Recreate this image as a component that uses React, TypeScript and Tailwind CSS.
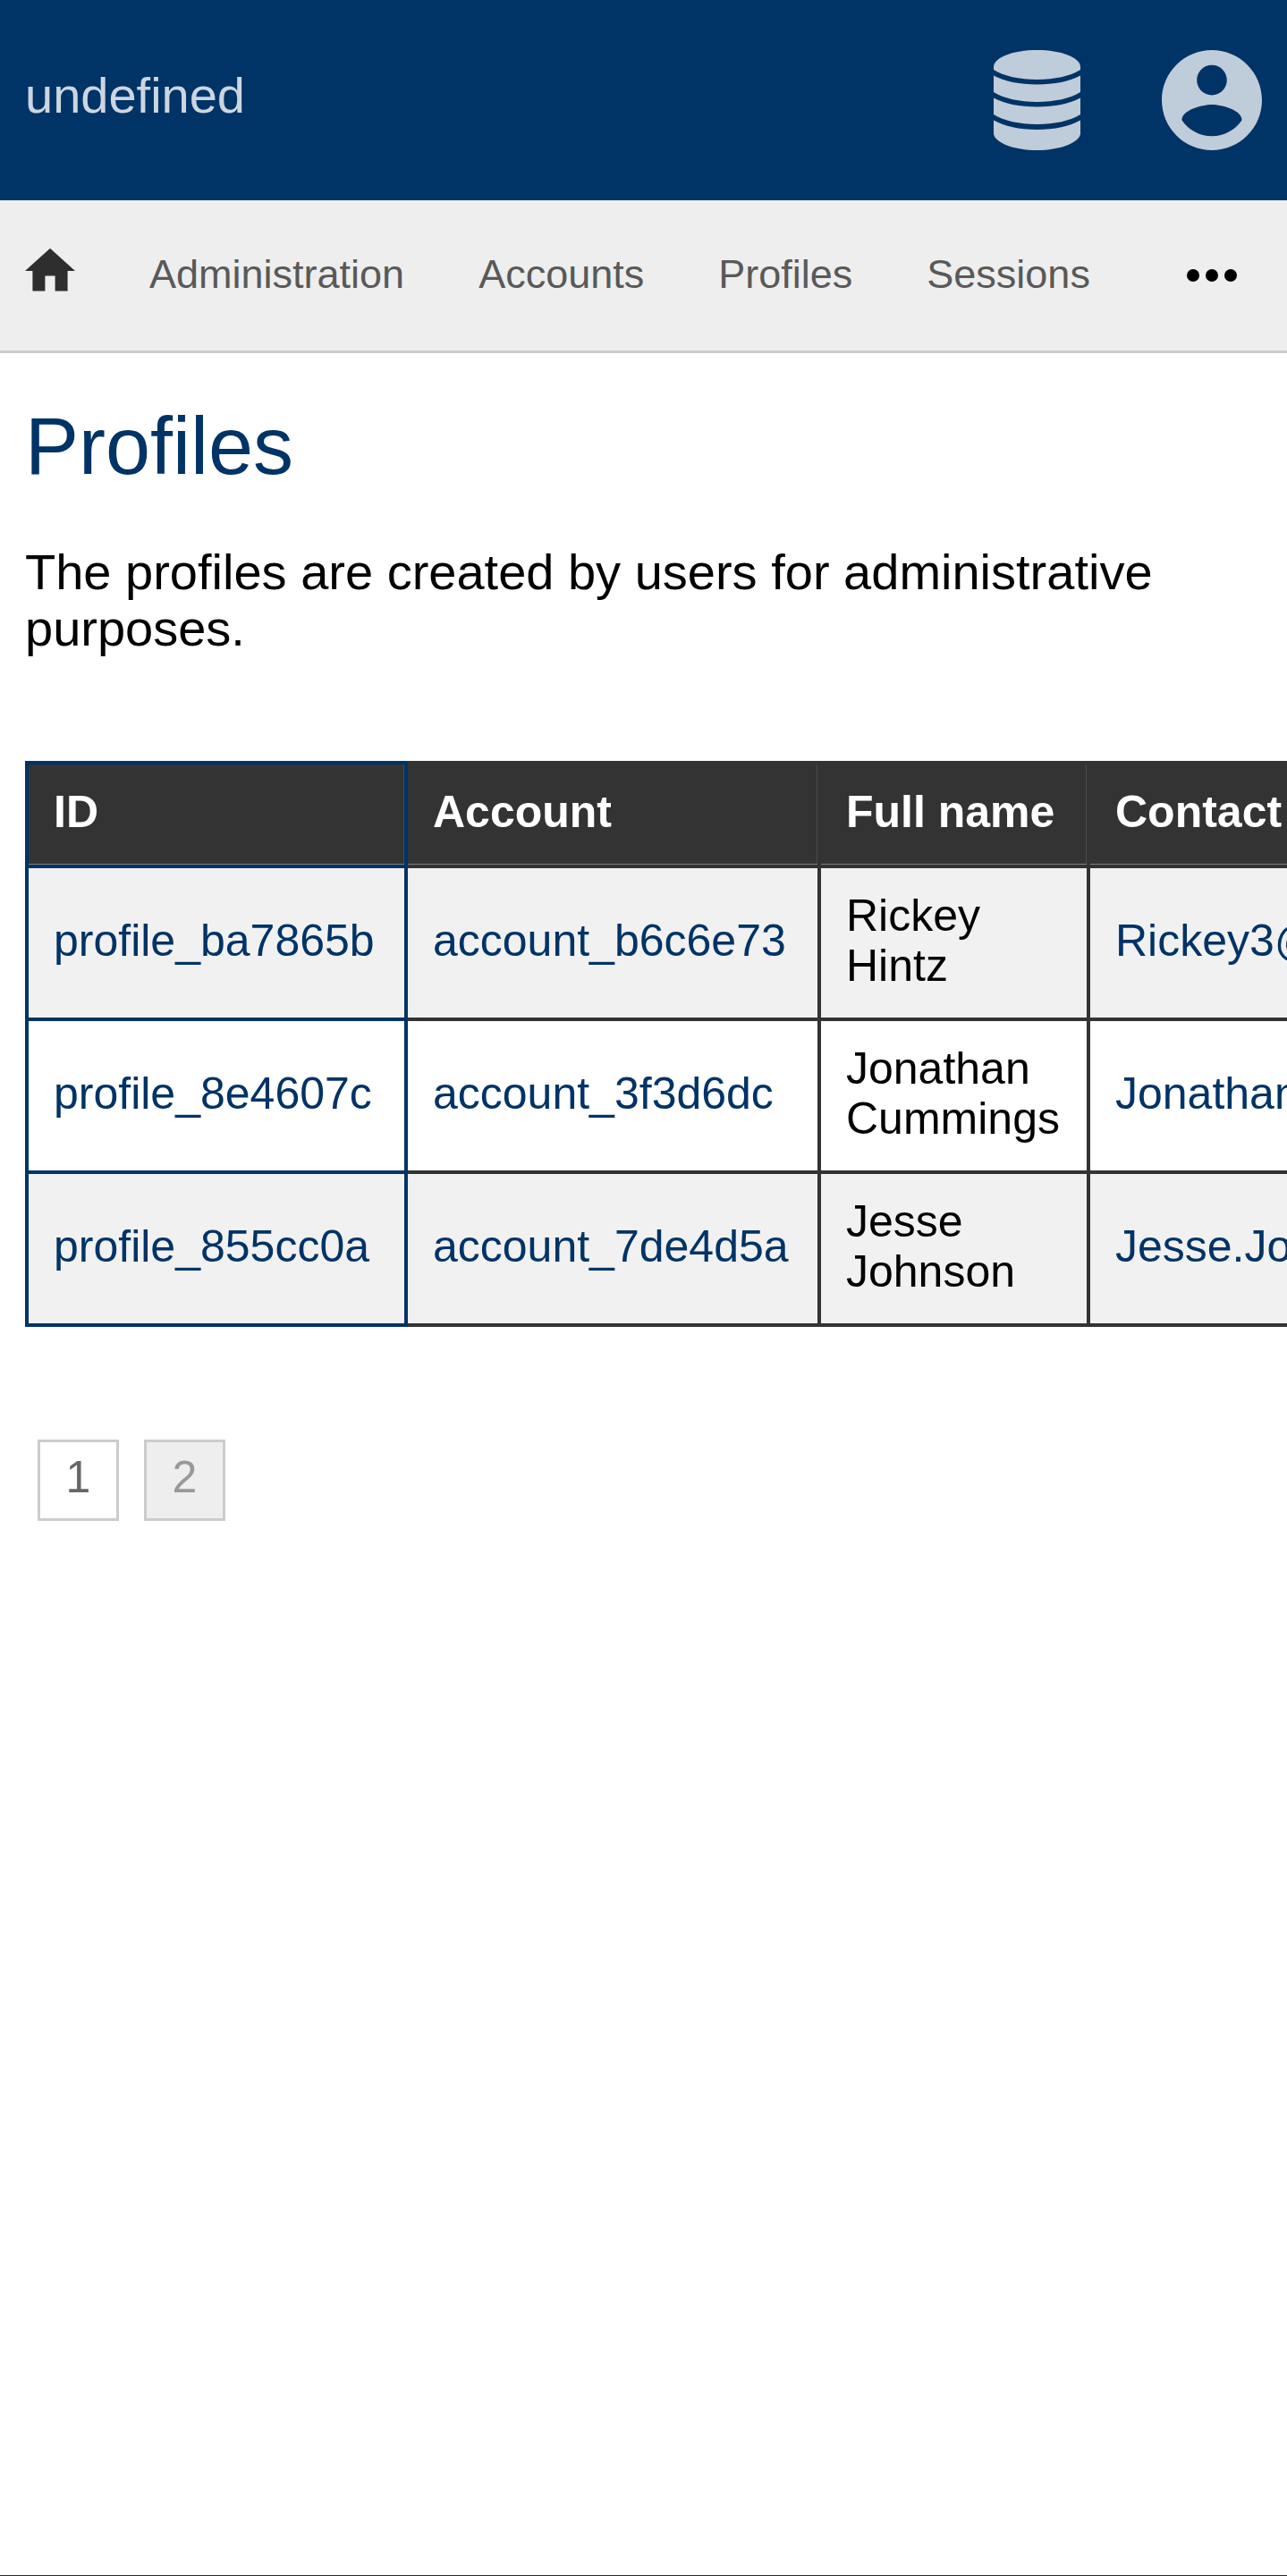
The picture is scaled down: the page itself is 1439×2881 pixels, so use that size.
import React from "react";

const navItems = ["Administration", "Accounts", "Profiles", "Sessions"];

const profiles = [
  { id: "profile_ba7865b", account: "account_b6c6e73", name: "Rickey Hintz", contact: "Rickey3@gmail.com" },
  { id: "profile_8e4607c", account: "account_3f3d6dc", name: "Jonathan Cummings", contact: "Jonathan@gmail.com" },
  { id: "profile_855cc0a", account: "account_7de4d5a", name: "Jesse Johnson", contact: "Jesse.Johnson@gmail.com" },
];

const headCell = "border-4 px-7 pt-[25px] pb-[31px] text-left font-bold whitespace-nowrap shadow-[inset_0_-1px_0_#808080,inset_-1px_0_0_#4a4a4a]";
const bodyCell = "border-4 px-7 pt-[25px] pb-[30px]";
const linkStyle = "text-[#003366]";
const pageButton = "flex size-[91px] items-center justify-center border-[3px] border-[#cccccc] pb-2";

function DatabaseIcon() {
  return (
    <svg viewBox="0 0 97 112" className="h-28 w-[97px]" fill="currentColor" aria-hidden="true">
      <path d="M0 19C0 8 22 0 48.500 0S97 8 97 19V22C86 29 68 33 48.500 33S11 29 0 22Z" />
      <path d="M0 28.500C12 35 29 38.500 48.500 38.500S85 35 97 28.500V47C86 54 68 58 48.500 58S11 54 0 47Z" />
      <path d="M0 53.500C12 60 29 63.500 48.500 63.500S85 60 97 53.500V72C86 79 68 83 48.500 83S11 79 0 72Z" />
      <path d="M0 78.500C12 85 29 89 48.500 89S85 85 97 78.500V94C95 104 74 112 48.500 112S2 104 0 94Z" />
    </svg>
  );
}

function AccountIcon() {
  return (
    <svg viewBox="2 2 20 20" className="size-28" fill="currentColor" aria-hidden="true">
      <path d="M12 2C6.48 2 2 6.48 2 12s4.48 10 10 10 10-4.48 10-10S17.52 2 12 2zm0 3c1.66 0 3 1.34 3 3s-1.34 3-3 3-3-1.34-3-3 1.34-3 3-3zm0 14.200c-2.500 0-4.710-1.280-6-3.220.03-1.990 4-3.080 6-3.080 1.990 0 5.970 1.090 6 3.080-1.290 1.940-3.500 3.220-6 3.220z" />
    </svg>
  );
}

export default function App() {
  return (
    <div className="flex min-h-screen flex-col overflow-x-hidden bg-white font-['Liberation_Sans',Arial,sans-serif] text-black">
      <header className="flex h-56 shrink-0 items-center justify-between bg-[#003366] px-7">
        <a href="#" className="pb-3 text-[56px] leading-[63px] text-[#ccd6e0]">undefined</a>
        <div className="flex items-center gap-21">
          <button type="button" aria-label="Storage" className="flex size-28 items-center justify-center text-[#bfccd9]">
            <DatabaseIcon />
          </button>
          <button type="button" aria-label="Account" className="size-28 text-[#bfccd9]">
            <AccountIcon />
          </button>
        </div>
      </header>

      <nav className="flex shrink-0 items-center justify-between border-b-[3px] border-[#cccccc] bg-[#eeeeee] pr-14 pl-7">
        <div className="flex h-42 items-center gap-[83px]">
          <a href="#" aria-label="Home" className="pb-2.5 text-[#2e2e2e]">
            <svg viewBox="2 2 20 20" className="size-14" fill="currentColor" aria-hidden="true">
              <path d="M10 20v-6h4v6h5v-8h3L12 3 2 12h3v8z" />
            </svg>
          </a>
          {navItems.map((item) => (
            <a key={item} href="#" className="pb-0.5 text-[45px] leading-[52px] text-[#595959]">{item}</a>
          ))}
        </div>
        <button type="button" aria-label="More" className="text-black">
          <svg viewBox="0 0 56 14" className="h-3.5 w-14" fill="currentColor" aria-hidden="true">
            <circle cx="7" cy="7" r="7" />
            <circle cx="28" cy="7" r="7" />
            <circle cx="49" cy="7" r="7" />
          </svg>
        </button>
      </nav>

      <main className="flex-1 pl-7">
        <h1 className="mt-[52px] text-[90px] leading-[104px] text-[#003366]">Profiles</h1>
        <p className="mt-[57px] mr-7 text-[56px] leading-[63px]">
          The profiles are created by users for administrative purposes.
        </p>

        <div className="mt-[117px] overflow-x-auto text-[50px] leading-[56px] [scrollbar-width:none]">
          <table className="w-[1860px] table-fixed border-collapse">
            <colgroup>
              <col className="w-[424px]" />
              <col className="w-[462px]" />
              <col className="w-[301px]" />
              <col />
            </colgroup>
            <thead className="bg-[#333333] text-white">
              <tr>
                <th className={`${headCell} border-[#003366]`}>ID</th>
                <th className={`${headCell} border-[#333333]`}>Account</th>
                <th className={`${headCell} border-[#333333]`}>Full name</th>
                <th className={`${headCell} border-[#333333]`}>Contact</th>
              </tr>
            </thead>
            <tbody>
              {profiles.map((p) => (
                <tr key={p.id} className="odd:bg-[#f1f1f1]">
                  <td className={`${bodyCell} border-[#003366]`}>
                    <a href="#" className={linkStyle}>{p.id}</a>
                  </td>
                  <td className={`${bodyCell} border-[#333333]`}>
                    <a href="#" className={linkStyle}>{p.account}</a>
                  </td>
                  <td className={`${bodyCell} border-[#333333]`}>{p.name}</td>
                  <td className={`${bodyCell} border-[#333333]`}>
                    <a href="#" className={linkStyle}>{p.contact}</a>
                  </td>
                </tr>
              ))}
            </tbody>
          </table>
        </div>

        <div className="mt-[126px] ml-3.5 flex gap-7 text-[50px] leading-[56px]">
          <button type="button" className={`${pageButton} bg-white text-[#666666]`}>1</button>
          <button type="button" disabled className={`${pageButton} bg-[#eeeeee] text-[#999999]`}>2</button>
        </div>
      </main>

      <footer className="h-px shrink-0 bg-[#003366]" />
    </div>
  );
}
